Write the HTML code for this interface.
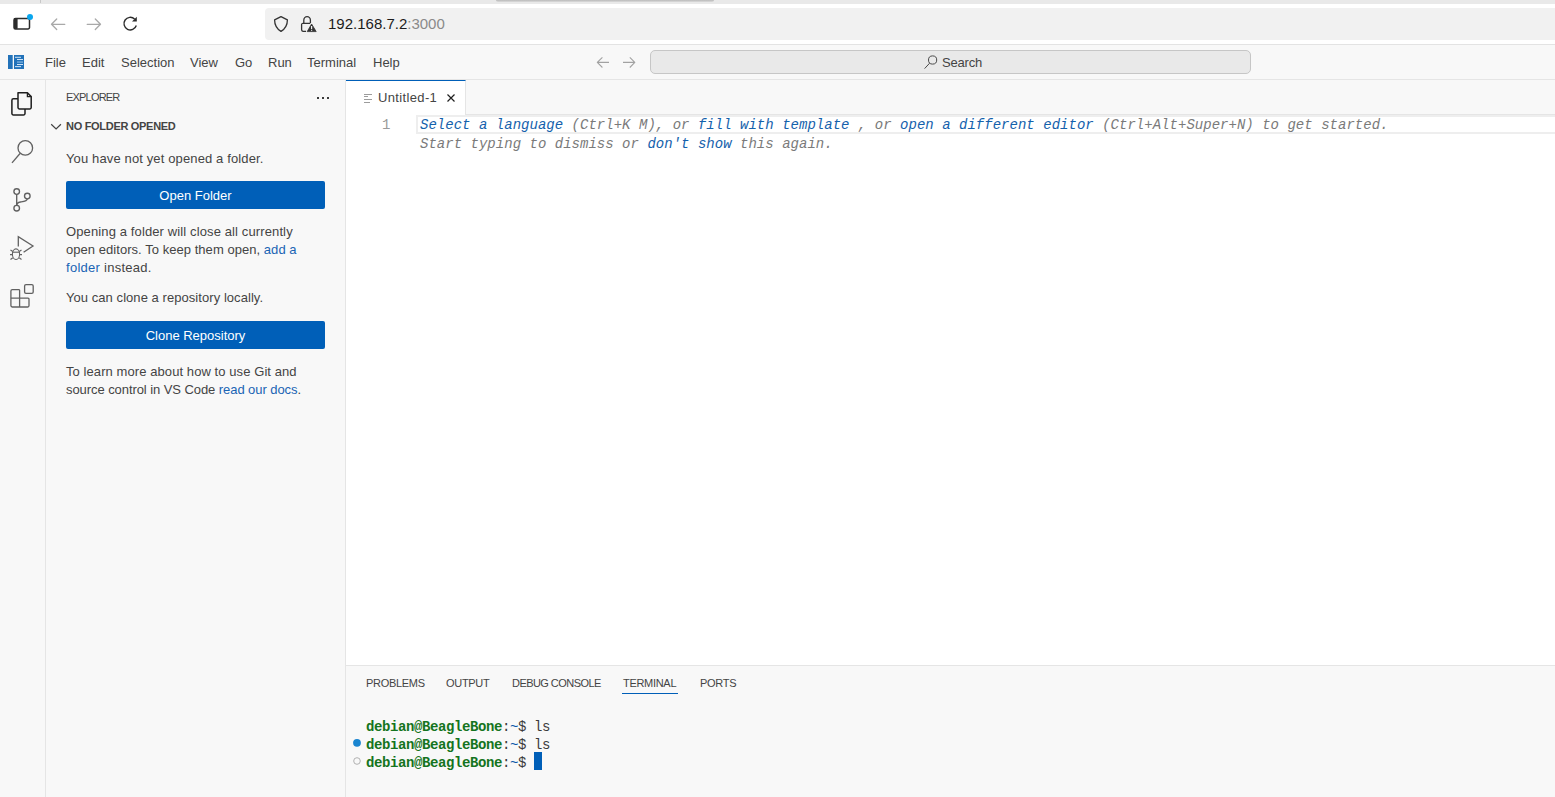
<!DOCTYPE html>
<html><head><meta charset="utf-8">
<style>
*{box-sizing:border-box;margin:0;padding:0}
html,body{width:1555px;height:797px;overflow:hidden;background:#fff;font-family:"Liberation Sans",sans-serif;color:#3b3b3b}
.a{position:absolute}
.mono{font-family:"Liberation Mono",monospace}
/* browser chrome */
#tabstrip{left:0;top:0;width:1555px;height:4px;background:#e9e9e9}
#toolbar{left:0;top:4px;width:1555px;height:40px;background:#fff}
#tbborder{left:0;top:44px;width:1555px;height:1px;background:#e3e3e3}
#urlbar{left:265px;top:8px;width:1290px;height:32px;background:#f1f1f1;border-radius:4px 0 0 4px}
#url{left:328px;top:15px;font-size:15px;color:#1c1c1c;white-space:pre}
/* vscode */
#titlebar{left:0;top:45px;width:1555px;height:35px;background:#f8f8f8;border-bottom:1px solid #e5e5e5}
.menu{top:55px;font-size:13px;color:#444;white-space:pre}
#cc{left:650px;top:50px;width:601px;height:24px;background:#e9e9e9;border:1px solid #c6c6c6;border-radius:5px}
#activity{left:0;top:80px;width:46px;height:717px;background:#f8f8f8;border-right:1px solid #e5e5e5}
#sidebar{left:46px;top:80px;width:300px;height:717px;background:#f8f8f8;border-right:1px solid #e5e5e5}
#editor{left:346px;top:80px;width:1209px;height:585px;background:#fff}
#tabs{left:346px;top:80px;width:1209px;height:35px;background:#f8f8f8;border-bottom:1px solid #e5e5e5}
#tab1{left:346px;top:80px;width:120px;height:35px;background:#fff;border-top:1px solid #005fb8;border-right:1px solid #e5e5e5}
#panel{left:346px;top:665px;width:1209px;height:132px;background:#f8f8f8;border-top:1px solid #e5e5e5}
.side{font-size:13px;color:#444;white-space:pre}
.para{letter-spacing:0.13px}
.btn{left:66px;width:259px;height:28px;background:#005fb8;color:#fff;border-radius:2px;font-size:13px;text-align:center;line-height:30px}
.link{color:#1a64b4}
.ed{font-family:"Liberation Mono",monospace;font-size:14px;font-style:italic;white-space:pre;color:#7a7a7a;letter-spacing:0.02px}
.ed .l{color:#1461ac}
.ptab{top:677px;font-size:11px;color:#444;white-space:pre;letter-spacing:-0.3px}
.term{font-family:"Liberation Mono",monospace;font-size:14px;letter-spacing:-0.4px;white-space:pre;color:#3b3b3b}
.term b{color:#147420}
.term .bl{color:#0451a5}
</style></head><body>
<div class="a" id="tabstrip"></div>
<div class="a" style="left:496px;top:0;width:218px;height:2px;background:linear-gradient(#b9b9b9,#dcdcdc);border-radius:0 0 2px 2px"></div>
<div class="a" id="toolbar"></div>
<div class="a" id="tbborder"></div>
<div class="a" id="urlbar"></div>

<svg class="a" style="left:0;top:0" width="400" height="44" viewBox="0 0 400 44">
 <line x1="40.5" y1="0" x2="40.5" y2="3" stroke="#c8c8c8" stroke-width="1"/>
 <path d="M15.5 18.5 h12.5 a1.5 1.5 0 0 1 1.5 1.5 v7.5 a1.5 1.5 0 0 1 -1.5 1.5 h-12.5 a1.5 1.5 0 0 1 -1.5 -1.5 v-7.5 a1.5 1.5 0 0 1 1.5 -1.5z" fill="none" stroke="#2b2b2b" stroke-width="1.5"/>
 <rect x="14" y="18" width="3.6" height="11" rx="1" fill="#2b2b2b"/>
 <circle cx="30" cy="17" r="3" fill="#0aa6ee"/>
 <path d="M64.8 24.3 H51.8 M56.7 19 L51.5 24.3 L56.7 29.5" fill="none" stroke="#a9a9a9" stroke-width="1.3" stroke-linecap="round" stroke-linejoin="round"/>
 <path d="M87.2 24.3 H100.2 M95.3 19 L100.5 24.3 L95.3 29.5" fill="none" stroke="#a9a9a9" stroke-width="1.3" stroke-linecap="round" stroke-linejoin="round"/>
 <path d="M136.3 25.5 A6.3 6.3 0 1 1 134.6 19" fill="none" stroke="#2b2b2b" stroke-width="1.4"/>
 <path d="M136.8 16.8 L136.8 21.6 L132 21.6 Z" fill="#2b2b2b"/>
 <path d="M281 16.6 L274.6 19.9 C274.6 25 276.5 28.5 281 31.4 C285.5 28.5 287.4 25 287.4 19.9 Z" fill="none" stroke="#333" stroke-width="1.3" stroke-linejoin="round"/>
 <path d="M303.8 23.2 V20.2 A3.3 3.6 0 0 1 310.4 20.2 V23.2" fill="none" stroke="#333" stroke-width="1.3"/>
 <path d="M306 31.3 H303 A1.5 1.5 0 0 1 301.6 29.8 V24.6 A1.3 1.3 0 0 1 303 23.3 H310" fill="none" stroke="#333" stroke-width="1.3"/>
 <path d="M311.6 24 L316.2 31.6 L307.2 31.6 Z" fill="#333" stroke="#333" stroke-width="0.8" stroke-linejoin="round"/>
 <rect x="311" y="26" width="1.2" height="3" fill="#f0f0f0"/>
 <rect x="311" y="29.8" width="1.2" height="1" fill="#f0f0f0"/>
</svg>
<div class="a" id="url">192.168.7.2<span style="color:#8a8a8a">:3000</span></div>

<div class="a" id="titlebar"></div>
<div class="a menu" style="left:45px">File</div>
<div class="a menu" style="left:82px">Edit</div>
<div class="a menu" style="left:121px">Selection</div>
<div class="a menu" style="left:190px">View</div>
<div class="a menu" style="left:235px">Go</div>
<div class="a menu" style="left:268px">Run</div>
<div class="a menu" style="left:307px">Terminal</div>
<div class="a menu" style="left:373px">Help</div>
<div class="a" id="cc"></div>
<div class="a menu" style="left:942px;top:55px;letter-spacing:-0.2px">Search</div>

<div class="a" id="activity"></div>
<div class="a" id="sidebar"></div>
<div class="a side" style="left:66px;top:91px;font-size:11px;letter-spacing:-0.8px">EXPLORER</div>
<div class="a side" style="left:66px;top:120px;font-size:11px;font-weight:bold;letter-spacing:-0.3px">NO FOLDER OPENED</div>
<div class="a side" style="left:66px;top:151px;letter-spacing:0.13px">You have not yet opened a folder.</div>
<div class="a btn" style="top:181px">Open Folder</div>
<div class="a side" style="left:66px;top:223px;line-height:18px"><div style="letter-spacing:0.12px">Opening a folder will close all currently</div><div style="letter-spacing:0.045px">open editors. To keep them open, <span class="link">add a</span></div><div style="letter-spacing:0.27px"><span class="link">folder</span> instead.</div></div>
<div class="a side" style="left:66px;top:290px;letter-spacing:0.057px">You can clone a repository locally.</div>
<div class="a btn" style="top:321px">Clone Repository</div>
<div class="a side" style="left:66px;top:363px;line-height:18px"><div style="letter-spacing:0.08px">To learn more about how to use Git and</div><div style="letter-spacing:-0.07px">source control in VS Code <span class="link">read our docs</span>.</div></div>

<div class="a" id="editor"></div>
<div class="a" id="tabs"></div>
<div class="a" id="tab1"></div>
<div class="a side" style="left:378px;top:90px;letter-spacing:0.35px">Untitled-1</div>
<div class="a" style="left:346px;top:115px;width:1209px;height:19px;border:2px solid #eeeeee;border-right:none;left:416px"></div>
<div class="a ed" style="left:382px;top:117px;font-style:normal;color:#9a9a9a">1</div>
<div class="a ed" style="left:420px;top:117px"><span class="l">Select a language</span> (Ctrl+K M), or <span class="l">fill with template</span> , or <span class="l">open a different editor</span> (Ctrl+Alt+Super+N) to get started.</div>
<div class="a ed" style="left:420px;top:136px">Start typing to dismiss or <span class="l">don't show</span> this again.</div>

<div class="a" id="panel"></div>
<div class="a ptab" style="left:366px">PROBLEMS</div>
<div class="a ptab" style="left:446px">OUTPUT</div>
<div class="a ptab" style="left:512px;letter-spacing:-0.55px">DEBUG CONSOLE</div>
<div class="a ptab" style="left:623px">TERMINAL</div>
<div class="a" style="left:622px;top:693px;width:56px;height:1px;background:#005fb8"></div>
<div class="a ptab" style="left:700px">PORTS</div>
<div class="a term" style="left:366px;top:718px;line-height:18px"><b>debian@BeagleBone</b>:<span class="bl">~</span>$ ls
<b>debian@BeagleBone</b>:<span class="bl">~</span>$ ls
<b>debian@BeagleBone</b>:<span class="bl">~</span>$ </div>
<div class="a" style="left:534px;top:752px;width:8px;height:18px;background:#005fb8"></div>

<svg class="a" style="left:0;top:0;z-index:5" width="1555" height="797" viewBox="0 0 1555 797">
 <!-- logo -->
 <g fill="#2272b9">
  <rect x="8" y="55" width="4.7" height="14"/>
  <rect x="14" y="55" width="10" height="14"/>
 </g>
 <g fill="#e6f2ff">
  <rect x="15" y="56.8" width="6" height="0.9"/>
  <rect x="17" y="59" width="6" height="0.9"/>
  <rect x="17" y="61.6" width="6" height="0.9" fill="#a9cdee"/>
  <rect x="17" y="64" width="6" height="0.9"/>
  <rect x="15" y="66.2" width="6" height="0.9"/>
 </g>
 <!-- nav arrows -->
 <path d="M609 62.4 H597.5 M602.4 57.4 L597.3 62.4 L602.4 67.5" fill="none" stroke="#a2a2a2" stroke-width="1.1" stroke-linejoin="round"/>
 <path d="M623 62.4 H634.5 M629.8 57.4 L634.8 62.4 L629.8 67.5" fill="none" stroke="#a2a2a2" stroke-width="1.1" stroke-linejoin="round"/>
 <!-- search icon -->
 <circle cx="932.6" cy="60" r="4.1" fill="none" stroke="#4a4a4a" stroke-width="1"/>
 <path d="M929.6 63.2 L924.6 68.6" stroke="#4a4a4a" stroke-width="1"/>
 <!-- activity: files -->
 <path d="M18 92.8 H27.4 L31.2 96.6 V107.5 A1.5 1.5 0 0 1 29.7 109 H19.5 A1.5 1.5 0 0 1 18 107.5 Z" fill="none" stroke="#1f1f1f" stroke-width="1.5" stroke-linejoin="round"/>
 <path d="M27.4 92.8 V96.6 H31.2" fill="none" stroke="#1f1f1f" stroke-width="1.3"/>
 <path d="M18 98.7 H13.4 A1.5 1.5 0 0 0 11.9 100.2 V113.5 A1.5 1.5 0 0 0 13.4 115 H23.5 A1.5 1.5 0 0 0 25 113.5 V109" fill="none" stroke="#1f1f1f" stroke-width="1.5"/>
 <!-- search -->
 <circle cx="25.3" cy="147.9" r="7.3" fill="none" stroke="#616161" stroke-width="1.3"/>
 <path d="M20 153.5 L12 162.8" stroke="#616161" stroke-width="1.3"/>
 <!-- source control -->
 <g fill="none" stroke="#616161" stroke-width="1.35">
  <circle cx="16.7" cy="191.5" r="2.8"/>
  <circle cx="16.7" cy="208.2" r="2.8"/>
  <circle cx="27.3" cy="196" r="2.8"/>
  <path d="M16.7 194.3 V205.4"/>
  <path d="M27.3 198.8 C27.3 201.3 23.5 201.6 20.5 202 C18 202.4 16.7 203.5 16.7 205.4"/>
 </g>
 <!-- run & debug -->
 <g fill="none" stroke="#616161" stroke-width="1.3" stroke-linejoin="miter">
  <path d="M18.3 246.5 V236.6 L33 246 L23.6 252.3"/>
 </g>
 <g fill="none" stroke="#616161" stroke-width="1.1">
  <ellipse cx="16" cy="254.2" rx="3.6" ry="5.3"/>
  <path d="M12.4 252.2 H19.6"/>
  <path d="M10 254.6 H12.4 M19.6 254.6 H22"/>
  <path d="M10.5 250 L12.8 251.5 M21.5 250 L19.2 251.5"/>
  <path d="M10.5 259.5 L12.8 257.8 M21.5 259.5 L19.2 257.8"/>
 </g>
 <!-- extensions -->
 <g fill="none" stroke="#616161" stroke-width="1.3" stroke-linejoin="round">
  <path d="M12.3 289.6 H18.3 A1 1 0 0 1 19.6 290.8 V298.2 H27.8 A1 1 0 0 1 29 299.4 V305.6 A1.4 1.4 0 0 1 27.6 307 H12.3 A1.4 1.4 0 0 1 10.9 305.6 V291 A1.4 1.4 0 0 1 12.3 289.6 Z"/>
  <path d="M10.9 298.2 H19.6 V307"/>
  <rect x="24.6" y="284.7" width="8.6" height="8.6" rx="1.4"/>
 </g>
 <!-- chevron -->
 <path d="M51.2 124.3 L56.1 128.9 L60.9 124.3" fill="none" stroke="#424242" stroke-width="1.2"/>
 <!-- ellipsis -->
 <g fill="#3b3b3b">
  <rect x="317" y="97" width="2" height="2"/><rect x="322" y="97" width="2" height="2"/><rect x="327" y="97" width="2" height="2"/>
 </g>
 <!-- tab icon -->
 <g fill="#9c9c9c">
  <rect x="364" y="94" width="8" height="1"/><rect x="364" y="96" width="4" height="1"/><rect x="364" y="99" width="8" height="1"/><rect x="364" y="102" width="6" height="1"/>
 </g>
 <!-- close x -->
 <path d="M447.5 94.5 L454.5 101.5 M454.5 94.5 L447.5 101.5" stroke="#1f1f1f" stroke-width="1.2"/>
 <!-- terminal decorations -->
 <circle cx="357" cy="742.8" r="3.9" fill="#1a85d0"/>
 <circle cx="357" cy="761" r="3.3" fill="none" stroke="#a9a9a9" stroke-width="0.9"/>
</svg>
</body></html>
